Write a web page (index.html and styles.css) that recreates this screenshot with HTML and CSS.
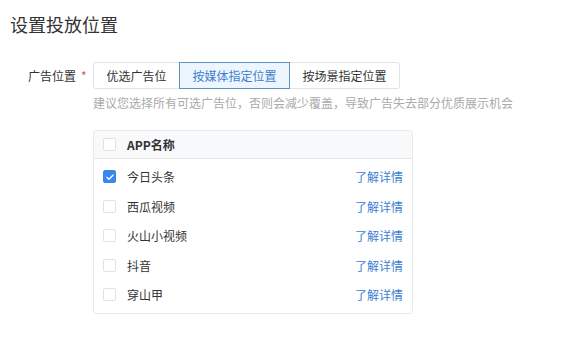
FILE: index.html
```html
<!DOCTYPE html>
<html>
<head>
    <title>设置投放位置</title>
    <link rel="stylesheet" href="styles.css">
</head>
<body>
    <h2 class="title">设置投放位置</h2>

    <div class="form-row">
        <div class="label">广告位置<span class="required">*</span></div>
        <div class="field">
            <div class="btn-group">
                <button class="btn">优选广告位</button>
                <button class="btn active">按媒体指定位置</button>
                <button class="btn">按场景指定位置</button>
            </div>
            <p class="hint">建议您选择所有可选广告位，否则会减少覆盖，导致广告失去部分优质展示机会</p>

            <div class="table">
                <div class="table-head">
                    <span class="checkbox"></span>
                    <span class="name">APP名称</span>
                </div>
                <div class="table-body">
                    <div class="row">
                        <span class="checkbox checked">
                            <svg width="10" height="8" viewBox="0 0 10 8"><path d="M1.5 4 L4 6.3 L8.5 1.7" fill="none" stroke="#fff" stroke-width="1.3"/></svg>
                        </span>
                        <span class="name">今日头条</span>
                        <a class="link" href="#">了解详情</a>
                    </div>
                    <div class="row">
                        <span class="checkbox"></span>
                        <span class="name">西瓜视频</span>
                        <a class="link" href="#">了解详情</a>
                    </div>
                    <div class="row">
                        <span class="checkbox"></span>
                        <span class="name">火山小视频</span>
                        <a class="link" href="#">了解详情</a>
                    </div>
                    <div class="row">
                        <span class="checkbox"></span>
                        <span class="name">抖音</span>
                        <a class="link" href="#">了解详情</a>
                    </div>
                    <div class="row">
                        <span class="checkbox"></span>
                        <span class="name">穿山甲</span>
                        <a class="link" href="#">了解详情</a>
                    </div>
                </div>
            </div>
        </div>
    </div>
</body>
</html>
```

FILE: styles.css
```css
body {
    margin: 0;
    padding: 12px 10px;
    font-family: "Noto Sans CJK SC", "Noto Sans", sans-serif;
    font-size: 12px;
    color: #333;
    background: #fff;
}

.title {
    margin: 0;
    font-size: 18px;
    font-weight: normal;
    line-height: 24px;
    color: #333;
}

.form-row {
    display: flex;
    margin-top: 26px;
}

.label {
    width: 83px;
    padding-left: 18px;
    box-sizing: border-box;
    line-height: 27px;
    color: #333;
}

.required {
    color: #e05252;
    margin-left: 5px;
}

.btn-group {
    display: flex;
}

.btn {
    height: 27px;
    padding: 0 12.5px;
    font-family: inherit;
    font-size: 12px;
    color: #333;
    background: #fff;
    border: 1px solid #e3e3e3;
    margin-left: -1px;
    cursor: pointer;
}

.btn:first-child {
    margin-left: 0;
    border-radius: 3px 0 0 3px;
}

.btn:last-child {
    border-radius: 0 3px 3px 0;
}

.btn.active {
    color: #3d7fcc;
    background: #edf6fe;
    border-color: #5b93c4;
    position: relative;
}

.hint {
    margin: 5px 0 0;
    font-size: 12px;
    line-height: 18px;
    color: #aaa;
}

.table {
    width: 320px;
    margin-top: 18px;
    border: 1px solid #eaeaea;
    border-radius: 3px;
    box-sizing: border-box;
}

.table-head {
    display: flex;
    align-items: center;
    height: 27px;
    padding: 0 9px;
    background: #f8f9fa;
    border-bottom: 1px solid #e6e6e6;
}

.table-head .name {
    font-weight: bold;
}

.table-body {
    padding: 3px 0;
}

.row {
    display: flex;
    align-items: center;
    height: 29.5px;
    padding: 0 9px;
}

.checkbox {
    display: flex;
    align-items: center;
    justify-content: center;
    width: 13px;
    height: 13px;
    border: 1px solid #e2e2e2;
    border-radius: 2px;
    box-sizing: border-box;
    background: #fff;
}

.checkbox.checked {
    background: #3a88ee;
    border-color: #3a88ee;
}

.name {
    margin-left: 11px;
    flex: 1;
}

.link {
    color: #3b80d2;
    text-decoration: none;
}
```
